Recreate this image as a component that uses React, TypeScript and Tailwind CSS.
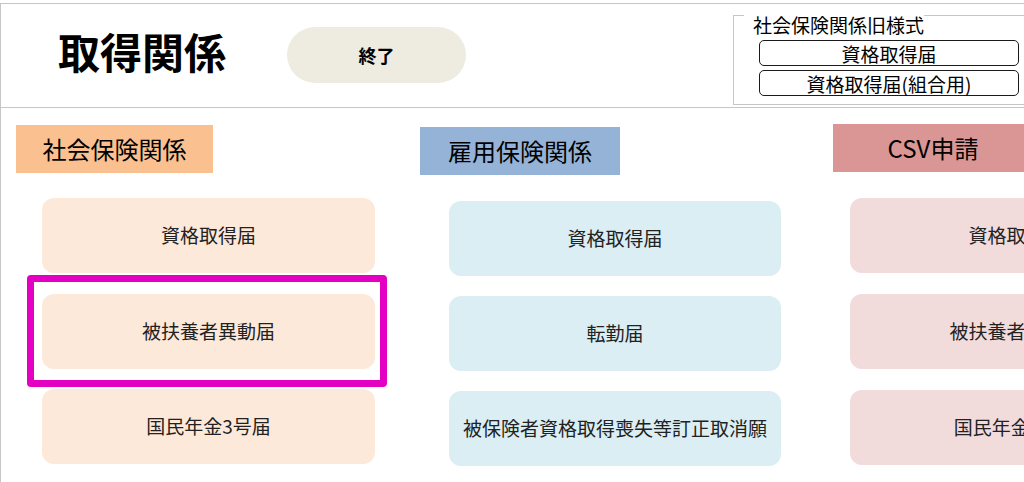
import React from 'react';

interface Section {
  title: string;
  column: string;
  head: string;
  list: string;
  card: string;
  items: string[];
}

const sections: Section[] = [
  {
    title: '社会保険関係',
    column: 'w-[406px]',
    head: 'ml-[15px] mt-[17px] w-[197px] bg-[#fac090]',
    list: 'ml-[41px] mt-[25px] w-[333px] gap-[20.5px]',
    card: 'bg-[#fde9d9]',
    items: ['資格取得届', '被扶養者異動届', '国民年金3号届'],
  },
  {
    title: '雇用保険関係',
    column: 'w-[406px]',
    head: 'ml-[13px] mt-[19px] w-[200px] bg-[#95b3d7]',
    list: 'ml-[42px] mt-[26px] w-[332px] gap-[20px]',
    card: 'bg-[#daeef3]',
    items: ['資格取得届', '転勤届', '被保険者資格取得喪失等訂正取消願'],
  },
  {
    title: 'CSV申請',
    column: 'w-[406px]',
    head: 'ml-[20px] mt-[16px] w-[200px] bg-[#d99694]',
    list: 'ml-[37px] mt-[26px] w-[332px] gap-[21px]',
    card: 'bg-[#f2dcdb]',
    items: ['資格取得届', '被扶養者異動届', '国民年金3号届'],
  },
];

const OldStyleBox: React.FC = () => (
  <div className="ml-[267px] mt-[11px] flex h-[90px] w-[320px] flex-col border-x border-b border-[#c6c6c6]">
    <div className="flex items-start">
      <div className="w-[10px] border-t border-[#c6c6c6]" />
      <span className="pl-[9px] text-[19px] leading-[20px] text-black">社会保険関係旧様式</span>
      <div className="flex-1 border-t border-[#c6c6c6]" />
    </div>
    <div className="ml-[25px] mt-[5px] flex w-[260px] flex-col gap-[4px]">
      <button className="h-[26px] rounded-[5px] border border-[#1a1a1a] bg-white text-[19px] leading-none text-black">
        資格取得届
      </button>
      <button className="h-[26px] rounded-[5px] border border-[#1a1a1a] bg-white text-[19px] leading-none text-black">
        資格取得届(組合用)
      </button>
    </div>
  </div>
);

export default function App() {
  return (
    <div
      className="h-[482px] w-full overflow-hidden bg-white pt-[3px]"
      style={{ fontFamily: '"Noto Sans CJK JP", "Noto Sans", sans-serif' }}
    >
      <div className="relative h-full w-[1240px] border-l border-t border-[#c6c6c6]">
        <header className="flex h-[104px] border-b border-[#c6c6c6]">
          <h1 className="ml-[57px] mt-[26px] w-[229px] self-start text-[42px] font-bold leading-[42px] text-black">
            取得関係
          </h1>
          <button className="mt-[23px] h-[56px] w-[179px] self-start rounded-full bg-[#eeece1] text-[18px] font-bold text-black">
            終了
          </button>
          <OldStyleBox />
        </header>

        <main className="flex">
          {sections.map((s) => (
            <section key={s.title} className={`flex flex-col ${s.column}`}>
              <div className={`flex h-[48px] items-center justify-center text-[24px] text-black ${s.head}`}>
                {s.title}
              </div>
              <div className={`flex flex-col ${s.list}`}>
                {s.items.map((item) => (
                  <button
                    key={item}
                    className={`flex h-[75px] items-center justify-center rounded-xl text-[19px] text-[#222] ${s.card}`}
                  >
                    {item}
                  </button>
                ))}
              </div>
            </section>
          ))}
        </main>

        {/* highlight around 被扶養者異動届 */}
        <div className="pointer-events-none absolute left-[26px] top-[271px] h-[112px] w-[360px] rounded-[4px] border-[7px] border-[#e400c2]" />
      </div>
    </div>
  );
}
